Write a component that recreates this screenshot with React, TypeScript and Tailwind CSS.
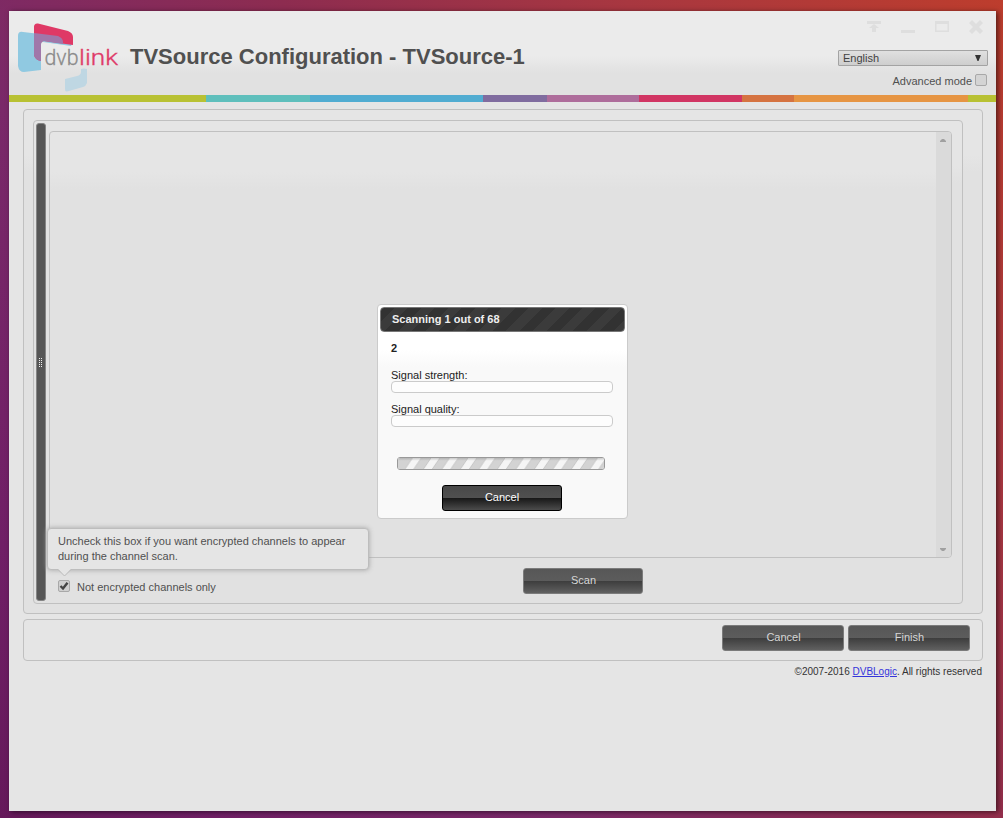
import type { ReactNode } from "react";

function Logo() {
  return (
    <svg width="104" height="72" viewBox="0 0 104 72" aria-label="dvblink">
      <path d="M6 9 L49 14 Q55 16 55 21 L54 23 L26 19 Q24 19 24 22 L24 47 L7 49 Q2 49 1 43 L1 13 Q1 8 6 9Z" fill="#90c9e1" />
      <path d="M21 .500 L51 8 Q56 10 56 14 L56 22 L27 18 Q24 18 24 21 L24 38 Q18 37 17 32 L17 4 Q17 0 21 .500Z" fill="#df3966" />
      <path d="M17 10 L41 13 Q46 15 46 19 L46 21 L27 18 Q24 18 24 21 L24 38 Q18 37 17 32Z" fill="#a077aa" />
      <path d="M64 46 Q67 45 70 46 L70 60 Q69 63 66 64 L50 68.500 Q48 69 48 66 L48 56 L60 53 Q64 52 64 49Z" fill="#bfd7e3" />
      <g fontFamily="Roboto, sans-serif" fontWeight="300" fontSize="21.500">
        <text x="27.500" y="41.500" textLength="34" lengthAdjust="spacingAndGlyphs" fill="#8b8b8b" stroke="#8b8b8b" strokeWidth=".3">dvb</text>
        <text x="62" y="41.500" textLength="39" lengthAdjust="spacingAndGlyphs" fill="#df3b69" stroke="#df3b69" strokeWidth=".35">link</text>
      </g>
    </svg>
  );
}

const STRIPES: [string, string][] = [
  ["w-[197px]", "bg-[#b8c133]"],
  ["w-[104px]", "bg-[#5fbfbc]"],
  ["w-[173px]", "bg-[#51acd1]"],
  ["w-[64px]", "bg-[#806c9f]"],
  ["w-[92px]", "bg-[#ae6d9b]"],
  ["w-[103px]", "bg-[#d13563]"],
  ["w-[52px]", "bg-[#d57341]"],
  ["w-[174px]", "bg-[#e69543]"],
  ["w-[28px]", "bg-[#b8c133]"],
];

function GlossButton({ children, className }: { children: ReactNode; className: string }) {
  return (
    <button
      className={`h-[26px] rounded-[3px] border border-[#7b7b7b] bg-[linear-gradient(#575757_0,#5c5c5c_12px,#3d3d3d_12px,#606060_100%)] pb-[2px] text-[11px] leading-[22px] text-[#d6d6d6] ${className}`}
    >
      {children}
    </button>
  );
}

function WindowControls() {
  return (
    <svg width="120" height="18" viewBox="0 0 120 18" fill="#dedede">
      <path d="M3 2h14v3H3zM10 5l5 4h-3v4H8V9H5zM37 11h14v3H37z" />
      <path d="M71 2h14v11H71zM72.500 5v6.500h11V5z" fillRule="evenodd" />
      <path d="M108 1l4 4 4-4 3 3-4 4 4 4-3 3-4-4-4 4-3-3 4-4-4-4z" />
    </svg>
  );
}

function Meter({ label, className }: { label: string; className: string }) {
  return (
    <div className={`h-[26px] ${className}`}>
      <div className="h-[13px] text-[11px] leading-[15px] text-[#222]">{label}</div>
      <div className="h-[12px] w-[222px] rounded-[4px] border border-[#cbcbcb] bg-[#fdfdfd]" />
    </div>
  );
}

function ScanDialog() {
  return (
    <div className="absolute left-[377px] top-[304px] flex h-[215px] w-[251px] flex-col rounded-[4px] border border-[#cbcbcb] bg-[linear-gradient(#fff_0,#fff_45px,#f9f9f9_62px)] p-[2px]">
      <div className="h-[25px] shrink-0 rounded-[4px] border border-[#777] bg-[repeating-linear-gradient(135deg,#323232_0,#323232_9.5px,#3b3b3b_9.5px,#3b3b3b_19px)] pl-[11px] text-[11px] font-bold leading-[23px] text-[#eee]">
        Scanning 1 out of 68
      </div>
      <div className="flex flex-col pl-[11px] pt-[9px]">
        <div className="h-[15px] text-[11px] font-bold leading-[15px] text-[#222]">2</div>
        <Meter label="Signal strength:" className="mt-[12px]" />
        <Meter label="Signal quality:" className="mt-[8px]" />
        <div className="ml-[6px] mt-[29px] h-[13px] w-[208px] overflow-hidden rounded-[3px] border border-[#999]">
          <svg width="206" height="11">
            <defs>
              <pattern id="hatch" width="18.500" height="11" patternUnits="userSpaceOnUse" x="-4">
                <rect width="18.500" height="11" fill="#d3d3d3" />
                <path d="M11 11L18.500 0V11zM0 0H8.800L1.300 11H0z" fill="#f5f5f5" />
                <path d="M11 11L18.500 0M1.300 11L8.800 0" stroke="#bdbdbd" strokeWidth=".7" />
              </pattern>
              <linearGradient id="shade" x2="0" y2="1">
                <stop stopColor="#888" stopOpacity=".4" />
                <stop offset=".25" stopColor="#888" stopOpacity="0" />
              </linearGradient>
            </defs>
            <rect width="206" height="11" fill="url(#hatch)" />
            <rect width="7" height="11" fill="#d3d3d3" />
            <rect width="206" height="11" fill="url(#shade)" />
          </svg>
        </div>
        <button className="ml-[51px] mt-[15px] h-[26px] w-[120px] rounded-[3px] border border-black bg-[linear-gradient(#484848_0,#505050_12px,#171717_12px,#4c4c4c_100%)] pb-[2px] text-[11px] leading-[22px] text-white">
          Cancel
        </button>
      </div>
    </div>
  );
}

function Hint() {
  return (
    <div className="absolute left-[47px] top-[528px] h-[42px] w-[322px] rounded-[4px] border border-[#bdbdbd] bg-[#e5e5e5] pl-[10px] pt-[5px] text-[11px] leading-[15px] text-[#505050] shadow-[0_0_5px_#a3a3a3]">
      Uncheck this box if you want encrypted channels to appear
      <br />
      during the channel scan.
      <svg className="absolute left-[9px] top-[39px]" width="16" height="9">
        <path d="M0 0h15L7.500 7.500z" fill="#e5e5e5" />
        <path d="M1 1.500L7.500 8L14 1.500" fill="none" stroke="#bcbcbc" />
      </svg>
    </div>
  );
}

export default function App() {
  return (
    <div className="relative flex h-[818px] w-[1003px] overflow-hidden bg-[linear-gradient(52deg,#65195a_0%,#701f66_13%,#7a2969_34%,#8d2c50_56%,#a83740_77%,#bd3d2d_100%)] pl-[9px] pt-[11px] font-['Liberation_Sans',Arial,sans-serif]">
      <div className="flex h-[800px] w-[987px] flex-col bg-[#e5e5e5] shadow-[2px_1px_5px_rgba(0,0,0,.55)]">
        <header className="flex h-[84px] shrink-0 justify-between bg-[linear-gradient(#ebebeb_0,#ebebeb_45px,#e1e1e1_62px,#e1e1e1_100%)]">
          <div className="flex pl-[8px] pt-[12px]">
            <Logo />
            <h1 className="ml-[9px] mt-[20px] h-[28px] whitespace-nowrap text-[22px] font-bold leading-[28px] text-[#505050]">
              TVSource Configuration - TVSource-1
            </h1>
          </div>
          <div className="flex flex-col items-end pr-[8px] pt-[8px]">
            <div className="mr-[4px] h-[18px]"><WindowControls /></div>
            <div className="mt-[13px] flex h-[16px] w-[150px] items-center justify-between rounded-[1px] border border-[#a3a3a3] bg-[linear-gradient(#e0e0e0,#cecece)] pl-[4px] pr-[5px] text-[11px] text-[#424242]">
              <span>English</span>
              <svg width="8" height="8"><path d="M1 1h6L4.500 7h-1z" fill="#333" /></svg>
            </div>
            <div className="mr-[1px] mt-[7px] flex items-start gap-[3px] text-[11px] leading-[14px] text-[#505050]">
              <span className="pt-[1px]">Advanced mode</span>
              <span className="mt-[1px] h-[12px] w-[12px] rounded-[2px] border border-[#a8a8a8] bg-[#d4d4d4]" />
            </div>
          </div>
        </header>

        <div className="flex h-[7px] shrink-0">
          {STRIPES.map(([width, color], i) => <div key={i} className={`${width} ${color}`} />)}
        </div>

        <main className="ml-[14px] mt-[7px] flex h-[505px] w-[960px] shrink-0 rounded-[4px] border border-[#c0c0c0] bg-[linear-gradient(#e5e5e5_0,#e5e5e5_45px,#e1e1e1_62px)] pl-[9px] pt-[10px]">
          <div className="flex h-[484px] w-[930px] rounded-[4px] border border-[#c0c0c0] bg-[linear-gradient(#e5e5e5_0,#e5e5e5_45px,#e1e1e1_62px)] pl-[2px] pt-[2px]">
            <div className="flex h-[478px] w-[10px] items-center justify-center rounded-[3px] border border-[#858585] bg-[#565656] pt-[2px]">
              <svg width="4" height="10" fill="#eee">
                <path d="M0 0h1v1H0zM2 0h1v1H2zM0 2h1v1H0zM2 2h1v1H2zM0 4h1v1H0zM2 4h1v1H2zM0 6h1v1H0zM2 6h1v1H2zM0 8h1v1H0zM2 8h1v1H2z" />
              </svg>
            </div>
            <div className="ml-[3px] flex w-[903px] flex-col pt-[8px]">
              <div className="flex h-[427px] justify-end overflow-hidden rounded-[4px] border border-[#c0c0c0] bg-[linear-gradient(#e5e5e5_0,#e5e5e5_40px,#e1e1e1_57px)]">
                <div className="flex w-[15px] flex-col items-center justify-between bg-[#dadada] pb-[5px] pr-[1px] pt-[6px]">
                  <svg width="6" height="4"><path d="M0 4V3L2 1h2L6 3v1z" fill="#a0a0a0" /></svg>
                  <svg width="6" height="4"><path d="M0 0v1L2 3h2L6 1V0z" fill="#a0a0a0" /></svg>
                </div>
              </div>
              <div className="mt-[10px] flex h-[28px]">
                <div className="flex w-[474px] pl-[9px] pt-[12px]">
                  <span className="h-[12px] w-[12px] rounded-[2px] border border-[#a8a8a8] bg-[#d0d0d0]">
                    <svg width="10" height="10"><path d="M1.500 5l2.500 2.500L8.500 1.800" fill="none" stroke="#444" strokeWidth="2.400" /></svg>
                  </span>
                  <span className="ml-[7px] h-[14px] text-[11px] leading-[15px] text-[#505050]">Not encrypted channels only</span>
                </div>
                <GlossButton className="w-[120px] pl-[1px]">Scan</GlossButton>
              </div>
            </div>
          </div>
        </main>

        <div className="ml-[14px] mt-[5px] flex h-[42px] w-[960px] shrink-0 justify-end gap-[4px] rounded-[4px] border border-[#c0c0c0] pr-[12px] pt-[5px]">
          <GlossButton className="w-[122px] pl-[1px]">Cancel</GlossButton>
          <GlossButton className="w-[122px] pl-[1px]">Finish</GlossButton>
        </div>
        <footer className="mr-[14px] mt-[4px] h-[14px] text-right text-[10px] leading-[14px] text-[#333]">
          ©2007-2016 <a href="#" className="text-[#3434db] underline">DVBLogic</a>. All rights reserved
        </footer>
      </div>
      <Hint />
      <ScanDialog />
    </div>
  );
}
